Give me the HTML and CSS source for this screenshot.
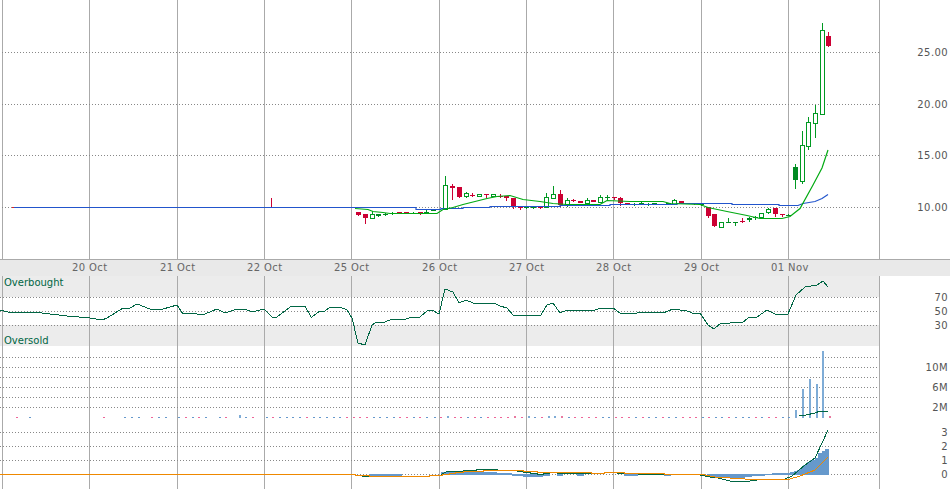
FILE: index.html
```html
<!DOCTYPE html>
<html lang="en">
<head>
<meta charset="utf-8">
<title>Stock chart</title>
<link rel="stylesheet" href="styles.css">
</head>
<body>
<main class="chart">
  <svg class="pane price" viewBox="0 0 950 259" width="950" height="259">
    <defs>
      <path id="vlines" class="vline" d="M2.5 0V489M89.5 0V489M177.5 0V489M264.5 0V489M351.5 0V489M439.5 0V489M526.5 0V489M613.5 0V489M701.5 0V489M788.5 0V489M879.5 0V489"/>
    </defs>
    <use href="#vlines"/>
    <path class="grid" d="M2 52.5H879M2 104.5H879M2 155.5H879M2 207.5H879"/>
    <path class="wick-red" d="M271.5 198V207M358.5 212V216M365.5 214V224M420.5 212V215M452.5 184V200M459.5 187V198M472.5 193V197M486.5 194V198M500.5 194V198M506.5 196V201M513.5 198V209M520.5 206V210M540.5 207V209M560.5 190V207M573.5 199V202M614.5 197V200M620.5 197V206M627.5 203V205M694.5 203V205M708.5 207V218M714.5 214V227M742.5 218V223M775.5 208V217M782.5 214V217M828.5 32V47"/>
    <path class="wick-green" d="M372.5 211V219M378.5 214V217M385.5 213V216M392.5 212V215M413.5 212V214M426.5 210V213M433.5 209V211M445.5 176V209M466.5 192V198M526.5 207V209M533.5 207V209M546.5 193V207M553.5 186V198M567.5 198V207M587.5 198V204M600.5 195V203M607.5 195V200M634.5 203V206M641.5 202V205M648.5 203V206M674.5 199V204M701.5 204V206M721.5 222V228M728.5 218V223M735.5 222V226M749.5 217V222M755.5 216V220M761.5 213V218M768.5 208V214M788.5 214V216M795.5 164V189M802.5 131V184M808.5 117V150M815.5 105V138M822.5 23V115"/>
    <path class="body-red" d="M356 212h5v3h-5zM363 214h5v4h-5zM397 212h5v1h-5zM404 212h5v1h-5zM418 212h5v1h-5zM450 186h5v2h-5zM457 187h5v10h-5zM470 195h5v1h-5zM484 194h5v1h-5zM498 196h5v1h-5zM504 196h5v2h-5zM511 198h5v8h-5zM518 207h5v1h-5zM538 207h5v1h-5zM558 194h5v11h-5zM571 200h5v1h-5zM578 201h5v2h-5zM591 200h5v2h-5zM612 197h5v1h-5zM618 198h5v5h-5zM625 203h5v2h-5zM659 204h5v1h-5zM679 201h5v2h-5zM686 203h5v1h-5zM692 203h5v1h-5zM706 207h5v9h-5zM712 214h5v12h-5zM740 221h5v1h-5zM773 208h5v6h-5zM780 214h5v1h-5zM826 36h5v10h-5z"/>
    <path class="body-green" d="M376 214h5v2h-5zM383 214h5v1h-5zM390 213h5v1h-5zM411 213h5v1h-5zM424 212h5v1h-5zM431 210h5v1h-5zM524 207h5v1h-5zM531 207h5v1h-5zM605 197h5v1h-5zM632 204h5v1h-5zM639 203h5v2h-5zM646 204h5v1h-5zM652 203h5v1h-5zM666 203h5v2h-5zM699 204h5v1h-5zM726 222h5v1h-5zM733 222h5v1h-5zM747 218h5v2h-5zM753 217h5v1h-5zM786 215h5v1h-5zM793 167h5v13h-5z"/>
    <path class="body-hollow" d="M370.5 214.5h4v4h-4zM443.5 185.5h4v24h-4zM464.5 193.5h4v3h-4zM477.5 194.5h4v2h-4zM491.5 194.5h4v2h-4zM544.5 197.5h4v10h-4zM551.5 194.5h4v4h-4zM565.5 200.5h4v5h-4zM585.5 200.5h4v3h-4zM598.5 197.5h4v5h-4zM672.5 200.5h4v4h-4zM719.5 222.5h4v5h-4zM759.5 213.5h4v4h-4zM766.5 209.5h4v3h-4zM800.5 145.5h4v36h-4zM806.5 122.5h4v24h-4zM813.5 113.5h4v10h-4zM820.5 30.5h4v84h-4z"/>
    <path class="tick-red" d="M12 207.5H14"/>
    <polyline class="ma-blue" points="14,207.5 416,207.5 416,209.5 441,209.5 441,208.5 463,208.5 463,207.5 490,207.5 490,206.5 560,206.5 560,205.5 610,205.5 610,204.5 677,204.5 677,203.5 732,203.5 732,204.5 779,204.5 779,205.5 798,205.5 803,203.5 815,201.5 822,198.5 828,194.5"/>
    <polyline class="ma-green" points="355,208.5 368,209.5 373,211.5 383,212.5 390,213.5 437,213.5 443,209.5 453,207.5 463,204.5 487,198.5 497,196.5 510,195.5 523,199.5 540,201.5 553,203.5 567,204.5 600,204.5 607,200.5 630,201.5 663,201.5 670,203.5 700,204.5 708,207.5 727,211.5 747,215.5 760,218.5 782,218.5 790,216.5 800,208.5 813,185 822,168 828,150"/>
    <g class="scale">
      <text x="948" y="56">25.00</text>
      <text x="948" y="108">20.00</text>
      <text x="948" y="159">15.00</text>
      <text x="948" y="211">10.00</text>
    </g>
  </svg>

  <svg class="pane axis" viewBox="0 260 950 16" width="950" height="16">
    <g class="dates">
      <text x="72" y="271">20 Oct</text>
      <text x="160" y="271">21 Oct</text>
      <text x="247" y="271">22 Oct</text>
      <text x="334" y="271">25 Oct</text>
      <text x="422" y="271">26 Oct</text>
      <text x="509" y="271">27 Oct</text>
      <text x="596" y="271">28 Oct</text>
      <text x="684" y="271">29 Oct</text>
      <text x="771" y="271">01 Nov</text>
    </g>
  </svg>

  <svg class="pane rsi" viewBox="0 276 950 70" width="950" height="70">
    <rect class="band" x="0" y="276" width="879" height="21"/>
    <rect class="band" x="0" y="325" width="879" height="21"/>
    <use href="#vlines"/>
    <path class="grid" d="M0 297.5H879M0 311.5H879M0 325.5H879"/>
    <text class="zone" x="4" y="286">Overbought</text>
    <text class="zone" x="4" y="344">Oversold</text>
    <polyline class="dark-line" points="0,310 8,312 33,312 50,314 67,316 90,318 102,320 107,318 123,308 130,308 137,304 150,309 163,309 177,305 183,314 190,313 197,314 205,314 217,309 225,313 237,309 245,309 252,312 264,309 272,317 277,317 290,307 298,306 305,306 311,317 312,317 320,311 325,311 330,307 340,307 347,310 352,318 358,343 365,345 372,325 377,322 385,322 392,319 403,320 412,317 420,317 427,311 432,310 439,314 445,289 453,292 459,303 466,300 473,303 480,303 487,304 494,303 500,306 507,308 513,315 541,315 547,305 553,303 560,313 567,310 577,311 587,310 593,311 600,308 613,308 620,313 637,313 638,312 657,312 663,313 673,309 687,311 695,314 700,313 708,325 714,329 721,323 730,323 735,322 742,323 748,318 757,317 767,310 775,314 782,315 788,314 796,295 805,287 817,285 823,281 828,287"/>
    <g class="scale">
      <text x="948" y="301">70</text>
      <text x="948" y="315">50</text>
      <text x="948" y="329">30</text>
    </g>
  </svg>

  <svg class="pane volume" viewBox="0 346 950 78" width="950" height="78">
    <use href="#vlines"/>
    <path class="grid" d="M0 357.5H879M0 367.5H879M0 377.5H879M0 387.5H879M0 397.5H879M0 407.5H879"/>
    <path class="mark-blue" d="M29 417.5h2M124 417.5h2M131 417.5h2M138 417.5h2M158 417.5h2M165 417.5h2M178 417.5h2M192 417.5h2M205 417.5h2M219 417.5h2M245 417.5h2M266 417.5h2M279 417.5h2M286 417.5h2M292 417.5h2M299 417.5h2M313 417.5h2M319 417.5h2M326 417.5h2M333 417.5h2M339 417.5h2M373 417.5h2M379 417.5h2M386 417.5h2M393 417.5h2M413 417.5h2M426 417.5h2M434 417.5h2M467 417.5h2M480 417.5h2M534 417.5h2M568 417.5h2M602 417.5h2M608 417.5h2M635 417.5h2M648 417.5h2M655 417.5h2M668 417.5h2M675 417.5h2M702 417.5h2M715 417.5h2M721 417.5h2M735 417.5h2M742 417.5h2M748 417.5h2M761 417.5h2M782 417.5h2M788 417.5h2"/>
    <path class="mark-pink" d="M16 417.5h2M103 417.5h2M151 417.5h2M185 417.5h2M198 417.5h2M225 417.5h2M252 417.5h2M272 417.5h2M306 417.5h2M346 417.5h2M353 417.5h2M359 417.5h2M366 417.5h2M399 417.5h2M406 417.5h2M419 417.5h2M440 417.5h2M454 417.5h2M460 417.5h2M474 417.5h2M487 417.5h2M494 417.5h2M500 417.5h2M507 417.5h2M521 417.5h2M541 417.5h2M574 417.5h2M581 417.5h2M588 417.5h2M595 417.5h2M615 417.5h2M621 417.5h2M628 417.5h2M642 417.5h2M662 417.5h2M682 417.5h2M689 417.5h2M695 417.5h2M708 417.5h2M728 417.5h2M755 417.5h2M768 417.5h2M775 417.5h2"/>
    <path class="bar-blue" d="M239 415h2v3h-2zM447 416h2v2h-2zM528 416h2v2h-2zM548 416h2v2h-2zM554 416h2v2h-2zM795 410h2v8h-2zM802 389h2v29h-2zM809 379h2v39h-2zM816 384h2v34h-2zM822 351h2v67h-2z"/>
    <path class="bar-pink" d="M514 416h2v2h-2zM561 416h2v2h-2zM829 416h2v2h-2z"/>
    <polyline class="dark-line" points="799,416 806,415 815,413 820,411 826,411 828,412"/>
    <g class="scale">
      <text x="948" y="371">10M</text>
      <text x="948" y="391">6M</text>
      <text x="948" y="411">2M</text>
    </g>
  </svg>

  <svg class="pane macd" viewBox="0 424 950 65" width="950" height="65">
    <use href="#vlines"/>
    <path class="grid" d="M0 432.5H879M0 446.5H879M0 460.5H879M0 474.5H879"/>
    <path class="hist" d="M369 474h33v2h-33zM441 475V472H446V471H459V472H497V473H512V475ZM512 474h11v2h-11zM523 474h20v3h-20zM543 474h7v2h-7zM557 474h6v2h-6zM577 474h7v2h-7zM624 474h14v2h-14zM664 474h7v2h-7zM707 474V477H718V478H745V477H752V476H765V475H772V474ZM772 475V473H790V472H794V471H797V470H800V468H803V465H807V462H810V460H815V458H818V453H822V451H825V449H829V475Z"/>
    <path class="dark-line" d="M355 475.5H362M362 476.5H389M429 475.5H440L444 473L447 471.5H463V470.5H476V469.5H497V470.5H510M517 471.5H523V472.5H530V473.5H537V474.5H543V473.5H550M557 473.5H591M617 473.5H624M638 474.5H664"/>
    <polyline class="dark-line" points="700,475 705,476 710,477 718,478 730,481 750,481 765,479 785,479 792,476 805,465 815,458 822,443 828,430"/>
    <path class="orange-line" d="M0 474.5H355V475.5H369V476.5H429V475.5H442V474.5H449V473.5H455V472.5H463V471.5H483V470.5H523V471.5H537V472.5H557V472.5H591V473.5H604V472.5H624V473.5H664V474.5H700"/>
    <polyline class="orange-line" points="700,474 715,477 745,479 790,479 800,476 815,470 828,457"/>
    <g class="scale">
      <text x="948" y="436">3</text>
      <text x="948" y="450">2</text>
      <text x="948" y="464">1</text>
      <text x="948" y="478">0</text>
    </g>
  </svg>
</main>
</body>
</html>
```

FILE: styles.css
```css
html, body {
  margin: 0;
  padding: 0;
  background: #fff;
  overflow: hidden;
}

.chart {
  display: flex;
  flex-direction: column;
  width: 950px;
  height: 489px;
}

.pane {
  display: block;
  flex: none;
  shape-rendering: crispEdges;
}

.axis {
  box-sizing: content-box;
  border-top: 1px solid #aaa;
  background: #e9e9e9;
}

.vline {
  stroke: #aaa;
  stroke-width: 1;
  fill: none;
}

.grid {
  stroke: #888;
  stroke-width: 1;
  stroke-dasharray: 1 2;
  fill: none;
}

.band {
  fill: #ececec;
}

text {
  font-family: "DejaVu Sans", sans-serif;
  font-size: 10px;
  letter-spacing: 0.4px;
}

.scale text {
  fill: #555;
  text-anchor: end;
}

.dates text {
  fill: #666;
}

.rsi .zone {
  fill: #006644;
  letter-spacing: 0;
}

.wick-red {
  stroke: #cc0033;
  fill: none;
}

.wick-green {
  stroke: #009922;
  fill: none;
}

.body-red {
  fill: #cc0033;
}

.body-green {
  fill: #008a22;
}

.body-hollow {
  fill: #fff;
  stroke: #009922;
  stroke-width: 1;
}

.tick-red {
  stroke: #e02020;
  fill: none;
}

.ma-blue {
  fill: none;
  stroke: #2255cc;
  stroke-width: 1.2;
  shape-rendering: geometricPrecision;
}

.ma-green {
  fill: none;
  stroke: #00aa11;
  stroke-width: 1.2;
  shape-rendering: geometricPrecision;
}

.dark-line {
  fill: none;
  stroke: #006644;
  stroke-width: 1;
}

.orange-line {
  fill: none;
  stroke: #ee8800;
  stroke-width: 1;
}

.mark-blue {
  stroke: #6699cc;
  stroke-width: 1.5;
  fill: none;
}

.mark-pink {
  stroke: #ee6699;
  stroke-width: 1.5;
  fill: none;
}

.bar-blue {
  fill: #7facd6;
}

.bar-pink {
  fill: #e87aa0;
}

.hist {
  fill: #6699cc;
}
```
